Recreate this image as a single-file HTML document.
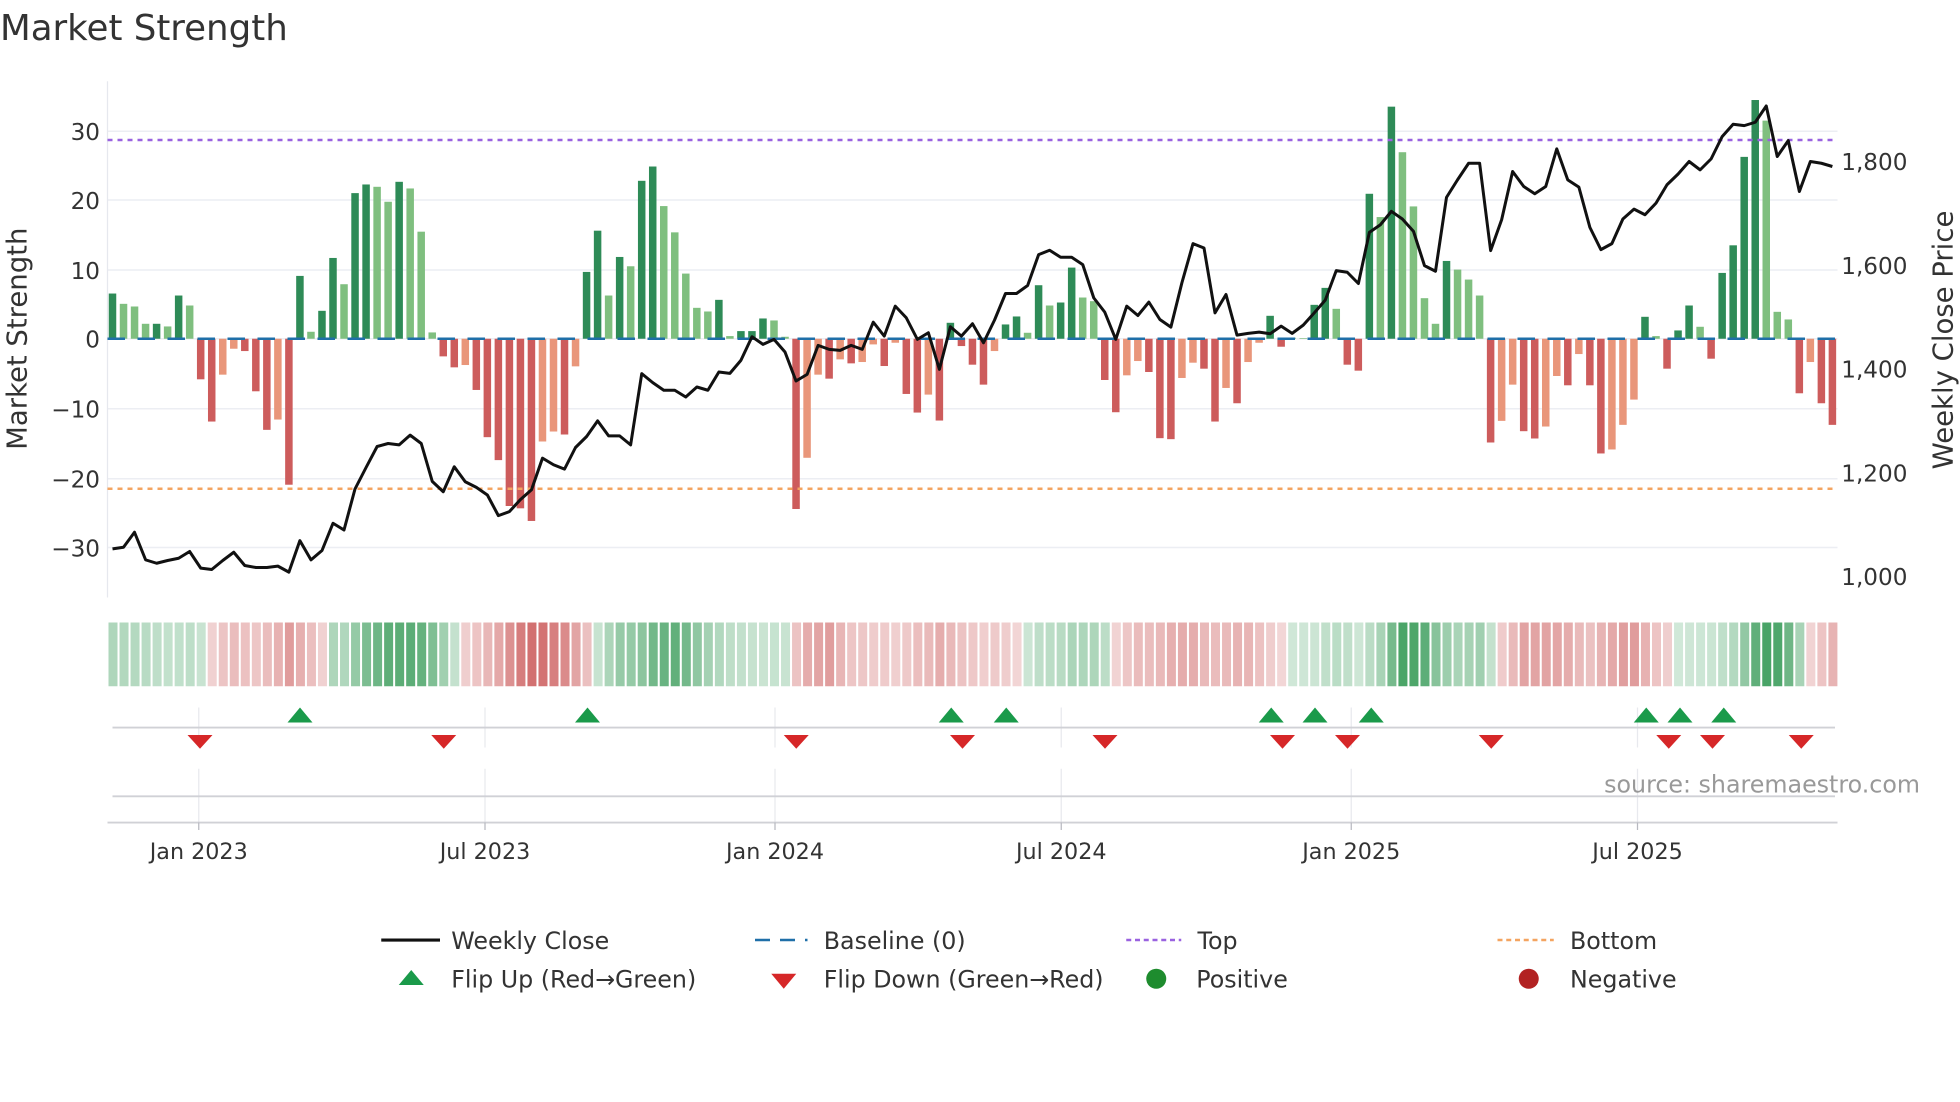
<!DOCTYPE html>
<html><head><meta charset="utf-8">
<style>
html,body{margin:0;padding:0;background:#fff;}
svg{display:block;font-family:"DejaVu Sans","Liberation Sans",sans-serif;}
</style></head>
<body>
<svg id="c" width="1960" height="1102" viewBox="0 0 1568 881.6" xmlns="http://www.w3.org/2000/svg">
<rect width="1568" height="882" fill="#fff"/>
<text x="0" y="32" font-size="28.5" fill="#333">Market Strength</text>
<g id="grid"></g>
<line x1="86" y1="65" x2="86" y2="478" stroke="#e6e8ee" stroke-width="1"/>
<g font-size="18.5" fill="#333" text-anchor="end">
<text x="80" y="112">30</text><text x="80" y="167">20</text><text x="80" y="223">10</text>
<text x="80" y="278">0</text><text x="80" y="334">−10</text><text x="80" y="390">−20</text><text x="80" y="445">−30</text>
</g>
<g font-size="18.5" fill="#333">
<text x="1473" y="136">1,800</text><text x="1473" y="219">1,600</text><text x="1473" y="302">1,400</text>
<text x="1473" y="385">1,200</text><text x="1473" y="468">1,000</text>
</g>
<text transform="translate(21,271) rotate(-90)" font-size="22" fill="#333" text-anchor="middle">Market Strength</text>
<text transform="translate(1562,272) rotate(-90)" font-size="22" fill="#333" text-anchor="middle">Weekly Close Price</text>
<g id="bars"></g>
<line x1="86" y1="271" x2="1470" y2="271" stroke="#1f6fa8" stroke-width="2" stroke-dasharray="14,10"/>
<line x1="86" y1="112" x2="1470" y2="112" stroke="#9a62e0" stroke-width="2" stroke-dasharray="4,4"/>
<line x1="86" y1="391" x2="1470" y2="391" stroke="#f4a460" stroke-width="2" stroke-dasharray="4,4"/>
<polyline id="price" fill="none" stroke="#111" stroke-width="2.4" stroke-linejoin="round"/>
<g id="strip"></g>
<g stroke="#e8e9ee" stroke-width="1">
<line x1="159" y1="566" x2="159" y2="598"/><line x1="388" y1="566" x2="388" y2="598"/><line x1="620" y1="566" x2="620" y2="598"/>
<line x1="849" y1="566" x2="849" y2="598"/><line x1="1081" y1="566" x2="1081" y2="598"/><line x1="1310" y1="566" x2="1310" y2="598"/>
<line x1="159" y1="615" x2="159" y2="658"/><line x1="388" y1="615" x2="388" y2="658"/><line x1="620" y1="615" x2="620" y2="658"/>
<line x1="849" y1="615" x2="849" y2="658"/><line x1="1081" y1="615" x2="1081" y2="658"/><line x1="1310" y1="615" x2="1310" y2="658"/>
</g>
<line x1="90" y1="582" x2="1468" y2="582" stroke="#d0d1d6" stroke-width="1.5"/>
<line x1="90" y1="637" x2="1468" y2="637" stroke="#d0d1d6" stroke-width="1.5"/>
<line x1="86" y1="658" x2="1470" y2="658" stroke="#d0d1d6" stroke-width="1.5"/>
<g stroke="#b8b9c0" stroke-width="1">
<line x1="159" y1="658" x2="159" y2="664"/><line x1="388" y1="658" x2="388" y2="664"/><line x1="620" y1="658" x2="620" y2="664"/>
<line x1="849" y1="658" x2="849" y2="664"/><line x1="1081" y1="658" x2="1081" y2="664"/><line x1="1310" y1="658" x2="1310" y2="664"/>
</g>
<g id="marks"></g>
<text x="1536" y="634" font-size="19" fill="#999" text-anchor="end">source: sharemaestro.com</text>
<g font-size="17.8" fill="#333" text-anchor="middle">
<text x="159" y="687">Jan 2023</text><text x="388" y="687">Jul 2023</text><text x="620" y="687">Jan 2024</text>
<text x="849" y="687">Jul 2024</text><text x="1081" y="687">Jan 2025</text><text x="1310" y="687">Jul 2025</text>
</g>
<g font-size="19" fill="#333">
<line x1="305" y1="752" x2="352" y2="752" stroke="#111" stroke-width="2.5"/>
<text x="361" y="759">Weekly Close</text>
<line x1="604" y1="752" x2="646" y2="752" stroke="#1f6fa8" stroke-width="2" stroke-dasharray="12,8"/>
<text x="659" y="759">Baseline (0)</text>
<line x1="901" y1="752" x2="945" y2="752" stroke="#9a62e0" stroke-width="2" stroke-dasharray="4,3"/>
<text x="958" y="759">Top</text>
<line x1="1198" y1="752" x2="1243" y2="752" stroke="#f4a460" stroke-width="2" stroke-dasharray="4,3"/>
<text x="1256" y="759">Bottom</text>
<polygon points="319,788 339,788 329,776" fill="#1a9a4a"/>
<text x="361" y="790">Flip Up (Red→Green)</text>
<polygon points="617,779 637,779 627,791" fill="#d62728"/>
<text x="659" y="790">Flip Down (Green→Red)</text>
<circle cx="925" cy="783" r="8" fill="#1e8c2e"/>
<text x="957" y="790">Positive</text>
<circle cx="1223" cy="783" r="8" fill="#b22222"/>
<text x="1256" y="790">Negative</text>
</g>
</svg>
<script>
(function(){
var NS="http://www.w3.org/2000/svg";
function el(t,a,p){var e=document.createElementNS(NS,t);for(var k in a)e.setAttribute(k,a[k]);p.appendChild(e);return e;}
var grid=document.getElementById('grid');
[105,160,216,271,327,383,438].forEach(function(y){el('line',{x1:86,y1:y,x2:1470,y2:y,stroke:'#eceef3','stroke-width':1.2},grid);});
var z1=[[642,'D'],[673,'L'],[681,'L'],[733,'L'],[733,'D'],[741,'L'],[648,'D'],[678,'L'],[900,'R'],[1027,'R'],[886,'S'],[808,'S'],[815,'R'],[936,'R'],[1052,'R'],[1021,'S'],[1217,'R'],[589,'D'],[757,'L'],[694,'D'],[535,'D'],[614,'L'],[340,'D'],[314,'D'],[321,'L'],[366,'L'],[306,'D'],[326,'L'],[456,'L'],[759,'L'],[831,'R'],[864,'R'],[857,'S'],[932,'R'],[1074,'R'],[1143,'R'],[1281,'R'],[1288,'R'],[1326,'R'],[1087,'S'],[1057,'S'],[1066,'R'],[861,'S'],[577,'D'],[453,'D'],[648,'L'],[532,'D'],[560,'L'],[303,'D'],[260,'D'],[379,'L'],[458,'L'],[582,'L'],[685,'L'],[696,'L'],[661,'D'],[770,'L'],[755,'D']];
var z2=[[755,'D'],[717,'D'],[723,'L'],[772,'L'],[1290,'R'],[1136,'S'],[886,'S'],[898,'R'],[840,'S'],[852,'R'],[848,'S'],[795,'S'],[860,'R'],[790,'S'],[944,'R'],[1000,'R'],[946,'S'],[1024,'R'],[730,'D'],[800,'R'],[856,'R'],[916,'R'],[815,'S'],[735,'D'],[711,'D'],[760,'L'],[617,'D'],[678,'L'],[669,'D'],[564,'D'],[654,'L'],[665,'L'],[902,'R'],[999,'R'],[888,'S'],[845,'S'],[878,'R'],[1077,'R'],[1080,'R'],[896,'S'],[850,'S'],[868,'R'],[1027,'R'],[926,'S'],[972,'R'],[848,'S'],[790,'S'],[709,'D'],[802,'R'],[775,'L'],[776,'L'],[676,'D'],[625,'D'],[688,'L'],[856,'R'],[874,'R'],[342,'D'],[412,'L']];
var z3=[[80,'D'],[217,'L'],[380,'L'],[656,'L'],[733,'L'],[544,'D'],[570,'L'],[600,'L'],[648,'L'],[1090,'R'],[1025,'S'],[916,'S'],[1056,'R'],[1078,'R'],[1042,'S'],[890,'S'],[918,'R'],[824,'S'],[918,'R'],[1123,'R'],[1111,'S'],[1037,'S'],[961,'S'],[712,'D'],[770,'L'],[868,'R'],[753,'D'],[678,'D'],[742,'L'],[838,'R'],[580,'D'],[497,'D'],[231,'D'],[60,'D'],[122,'L'],[697,'L'],[720,'L'],[942,'R'],[848,'S'],[972,'R'],[1037,'R']];
var all=z1.concat(z2,z3);
var col={D:'#2e8b57',L:'#7fbf7f',R:'#cd5c5c',S:'#e9967a'};
var bars=document.getElementById('bars'),strip=document.getElementById('strip');
var vals=[];
all.forEach(function(b,i){
  var x=90+i*8.82, y=271+(b[0]-778)*0.266;
  var top=Math.min(y,271), h=Math.abs(y-271);
  if(h>0.3) el('rect',{x:x-3,y:top,width:6,height:h,fill:col[b[1]]},bars);
  vals.push((271-y)/5.56);
});
for(var i=0;i<vals.length;i++){
  var s=0,n=0;for(var j=Math.max(0,i-3);j<=i;j++){s+=vals[j];n++;}
  var v=s/n, t=Math.min(1,Math.abs(v)/25);
  var a=0.22+0.65*t, c;
  if(v>=0){c=[46,150,80];}else{c=[200,80,80];}
  var r=Math.round(255+(c[0]-255)*a),g=Math.round(255+(c[1]-255)*a),bb=Math.round(255+(c[2]-255)*a);
  el('rect',{x:86+i*8.82+0.8,y:498,width:7.2,height:51,fill:'rgb('+r+','+g+','+bb+')'},strip);
}
var p1=[[30,1410],[55,1405],[83,1360],[110,1443],[137,1453],[163,1445],[190,1438],[216,1418],[243,1468],[270,1472],[296,1445],[323,1420],[350,1460],[376,1466],[403,1466],[430,1462],[456,1480],[483,1385],[510,1443],[537,1415],[563,1333],[590,1353],[616,1230],[643,1165],[670,1102],[697,1093],[723,1097],[750,1068],[776,1093],[803,1207],[829,1238],[856,1163],[882,1208],[909,1225],[936,1248],[962,1310],[989,1298],[1016,1262],[1042,1232],[1069,1137],[1096,1157],[1122,1170],[1149,1105],[1176,1072],[1202,1025],[1229,1070],[1256,1070],[1282,1097],[1309,883],[1336,910],[1362,933],[1389,933],[1416,953],[1442,923],[1469,933],[1496,878],[1522,882],[1549,843]];
var p2=[[30,772],[57,795],[84,780],[111,818],[138,905],[164,885],[191,798],[218,810],[244,813],[271,798],[297,810],[324,728],[350,770],[377,680],[404,715],[430,780],[457,760],[484,870],[510,742],[537,770],[563,733],[590,790],[617,722],[643,642],[670,642],[697,618],[723,525],[750,512],[777,533],[803,533],[829,555],[856,655],[882,698],[909,780],[936,680],[962,708],[989,668],[1016,720],[1042,743],[1069,610],[1096,492],[1122,505],[1149,700],[1176,645],[1202,767],[1229,762],[1256,758],[1282,763],[1309,740],[1336,762],[1362,737],[1389,700],[1416,662],[1442,573],[1469,578],[1496,612],[1522,458],[1549,435]];
var p3=[[156,395],[183,418],[211,455],[238,558],[266,575],[293,353],[321,300],[348,250],[376,250],[403,513],[431,420],[458,275],[486,320],[513,342],[540,320],[568,207],[595,300],[623,322],[650,443],[678,510],[705,492],[733,418],[760,388],[788,405],[815,370],[843,315],[870,283],[898,245],[925,270],[953,237],[980,170],[1008,133],[1035,137],[1063,127],[1090,78],[1118,230],[1145,182],[1173,335],[1200,245],[1228,250],[1255,260]];
var pts=[];
p1.forEach(function(p,i){pts.push([90+i*8.82,p[1]]);});
p2.forEach(function(p,i){pts.push([90+(58+i)*8.82,p[1]]);});
p3.forEach(function(p,i){pts.push([90+(116+i)*8.82,p[1]]);});
document.getElementById('price').setAttribute('points',pts.map(function(p){return p[0].toFixed(1)+','+(271+(p[1]-778)*0.266).toFixed(1);}).join(' '));
var m=document.getElementById('marks');
[240,470,761,805,1017,1052,1097,1317,1344,1379].forEach(function(x){el('polygon',{points:(x-10)+',578 '+(x+10)+',578 '+x+',566',fill:'#1a9a4a'},m);});
[160,355,637,770,884,1026,1078,1193,1335,1370,1441].forEach(function(x){el('polygon',{points:(x-10)+',588 '+(x+10)+',588 '+x+',599',fill:'#d62728'},m);});
})();
</script>
</body></html>
